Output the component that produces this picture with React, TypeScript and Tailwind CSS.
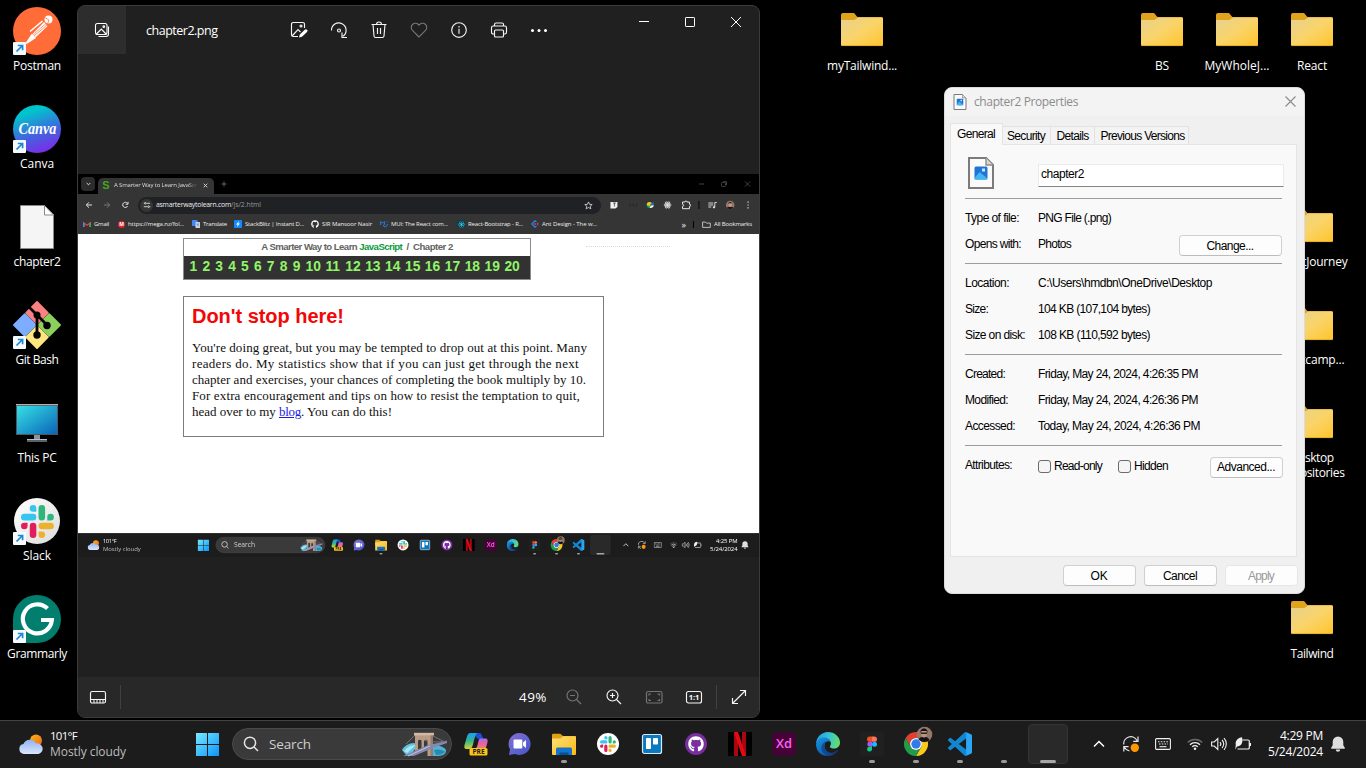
import { useLayoutEffect, useRef, useState } from "react";
import type { ReactNode } from "react";
import { FaGithub, FaReact } from "react-icons/fa";
import clsx from "clsx";

const UI = "font-['Open_Sans','Noto_Sans',sans-serif]";
const CLASSIC = "font-['Liberation_Sans',Arial,sans-serif]";

/** Text whose tracking is adjusted so that it spans `w` pixels. */
function Fit({ w, className, children }: { w: number; className?: string; children: string }) {
  const ref = useRef<HTMLSpanElement>(null);
  const [gap, setGap] = useState(0);
  useLayoutEffect(() => {
    if (ref.current) {
      const natural = parseFloat(getComputedStyle(ref.current).width);
      setGap((w - natural) / children.length);
    }
  }, []);
  return (
    <span ref={ref} className={clsx("inline-block w-max shrink-0 whitespace-pre", className)} style={{ letterSpacing: gap }}>
      {children}
    </span>
  );
}

/* ---------- Shared logos ---------- */

function SlackMark({ className }: { className?: string }) {
  return (
    <svg viewBox="0 0 54 54" className={className}>
      <path fill="#36C5F0" d="M19.712.133a5.381 5.381 0 0 0-5.376 5.387 5.381 5.381 0 0 0 5.376 5.386h5.376V5.52A5.381 5.381 0 0 0 19.712.133m0 14.365H5.376A5.381 5.381 0 0 0 0 19.884a5.381 5.381 0 0 0 5.376 5.387h14.336a5.381 5.381 0 0 0 5.376-5.387 5.381 5.381 0 0 0-5.376-5.386" />
      <path fill="#2EB67D" d="M53.76 19.884a5.381 5.381 0 0 0-5.376-5.386 5.381 5.381 0 0 0-5.376 5.386v5.387h5.376a5.381 5.381 0 0 0 5.376-5.387m-14.336 0V5.52A5.381 5.381 0 0 0 34.048.133a5.381 5.381 0 0 0-5.376 5.387v14.364a5.381 5.381 0 0 0 5.376 5.387 5.381 5.381 0 0 0 5.376-5.387" />
      <path fill="#ECB22E" d="M34.048 54a5.381 5.381 0 0 0 5.376-5.387 5.381 5.381 0 0 0-5.376-5.386h-5.376v5.386A5.381 5.381 0 0 0 34.048 54m0-14.365h14.336a5.381 5.381 0 0 0 5.376-5.386 5.381 5.381 0 0 0-5.376-5.387H34.048a5.381 5.381 0 0 0-5.376 5.387 5.381 5.381 0 0 0 5.376 5.386" />
      <path fill="#E01E5A" d="M0 34.249a5.381 5.381 0 0 0 5.376 5.386 5.381 5.381 0 0 0 5.376-5.386v-5.387H5.376A5.381 5.381 0 0 0 0 34.25m14.336-.001v14.364A5.381 5.381 0 0 0 19.712 54a5.381 5.381 0 0 0 5.376-5.387V34.25a5.381 5.381 0 0 0-5.376-5.387 5.381 5.381 0 0 0-5.376 5.387" />
    </svg>
  );
}

function ImageFileIcon({ className }: { className?: string }) {
  return (
    <svg viewBox="0 0 26 32" className={className}>
      <path d="M1 1h17l7 7v23H1z" fill="#fafafa" stroke="#7d7b78" strokeWidth="2" />
      <path d="M18 1v7h7" fill="#d8d6d3" stroke="#8d8b88" strokeWidth="1.4" />
      <rect x="6.500" y="9.500" width="13" height="13" rx="1.500" fill="#1f74d6" />
      <path d="M6.500 21l5-6 8 6.500a1.500 1.500 0 0 1-1.500 1H8a1.500 1.500 0 0 1-1.500-1.500z" fill="#41b6f0" />
      <rect x="14" y="11.500" width="3" height="3" fill="#c8e6ff" />
    </svg>
  );
}

/* ---------- Desktop ---------- */

function PostmanIcon() {
  return (
    <svg viewBox="0 0 48 48" className="size-12">
      <circle cx="24" cy="24" r="24" fill="#ff6c37" />
      <circle cx="35.500" cy="12.500" r="4" fill="#fff" />
      <path d="M32 10.500l3.800 2.400-1 3.600" stroke="#ff6c37" strokeWidth=".8" fill="none" />
      <path d="M31 15L19 27.500l3.500 3L34.500 19z" fill="#fff" />
      <path d="M17 24.500L29.500 14" stroke="#fff" strokeWidth="1.600" />
      <path d="M20.500 27.500L33 16.500M21 29L34 18" stroke="#ff6c37" strokeWidth=".7" />
      <path d="M18.500 27l4.500 4-8.500 5.500L12 37z" fill="#fff" />
    </svg>
  );
}

function CanvaIcon() {
  return (
    <svg viewBox="0 0 48 48" className="size-12">
      <defs>
        <linearGradient id="canva" x1=".3" y1="0" x2=".65" y2="1">
          <stop offset=".15" stopColor="#00c4cc" />
          <stop offset=".6" stopColor="#4165e0" />
          <stop offset="1" stopColor="#7d2ae8" />
        </linearGradient>
      </defs>
      <circle cx="24" cy="24" r="24" fill="url(#canva)" />
      <text x="24.500" y="28.500" textAnchor="middle" textLength="38" lengthAdjust="spacingAndGlyphs" fontFamily="Liberation Serif" fontStyle="italic" fontWeight="700" fontSize="16.500" fill="#fff">
        Canva
      </text>
    </svg>
  );
}

function DocIcon() {
  return (
    <svg viewBox="0 0 48 48" className="size-12">
      <path d="M7.500 2.500h24l9 9v34h-33z" fill="#f5f5f5" stroke="#8a8a8a" />
      <path d="M31.500 2.500v9.500h9z" fill="#fff" stroke="#8a8a8a" />
    </svg>
  );
}

function GitBashIcon() {
  return (
    <svg viewBox="0 0 48 48" className="size-12">
      <g strokeWidth="1.800" strokeLinejoin="round">
        <path d="M24 1L34.800 11.800 24 22.600 13.200 11.800z" fill="#fc8080" stroke="#fc8080" />
        <path d="M36.200 13.200L47 24 36.200 34.800 25.400 24z" fill="#8ccf5c" stroke="#8ccf5c" />
        <path d="M11.800 13.200L22.600 24 11.800 34.800 1 24z" fill="#7cadff" stroke="#7cadff" />
        <path d="M24 25.400L34.800 36.200 24 47 13.200 36.200z" fill="#ffe57f" stroke="#ffe57f" />
      </g>
      <path d="M16 6L24 14V35M24 14L34 24" stroke="#000" strokeWidth="2.800" fill="none" />
      <circle cx="24" cy="14" r="3.500" />
      <circle cx="24" cy="34" r="3.700" />
      <circle cx="34" cy="24.500" r="3.700" />
    </svg>
  );
}

function PcIcon() {
  return (
    <svg viewBox="0 2 48 48" className="size-12">
      <defs>
        <linearGradient id="pc" x1="0" y1="0" x2="1" y2="1">
          <stop offset="0" stopColor="#36e0e6" />
          <stop offset="1" stopColor="#0a64b8" />
        </linearGradient>
      </defs>
      <rect x="3" y="7.500" width="42" height="30.500" fill="#4e565e" />
      <rect x="3" y="7" width="42" height="1.200" fill="#aab2ba" />
      <rect x="4" y="9" width="40" height="28" fill="url(#pc)" />
      <rect x="21" y="38" width="6" height="4" fill="#8a929c" />
      <rect x="14" y="42" width="20" height="3" fill="#58606a" />
      <rect x="14" y="42" width="20" height="1" fill="#b8bfc8" />
    </svg>
  );
}

function SlackIcon() {
  return (
    <div className="flex size-12 items-center justify-center">
      <div className="flex size-[46px] items-center justify-center rounded-full bg-linear-to-br from-white to-[#dcdcdc]">
        <SlackMark className="size-[33px]" />
      </div>
    </div>
  );
}

function GrammarlyIcon() {
  return (
    <svg viewBox="0 0 48 48" className="size-12">
      <path d="M24 0a24 24 0 1 1 0 48H4a4 4 0 0 1-4-4V24A24 24 0 0 1 24 0z" fill="#027e6f" />
      <path d="M34.500 13.500A14.500 14.500 0 1 0 38.800 25H28" fill="none" stroke="#fff" strokeWidth="4.200" />
    </svg>
  );
}

function FolderIcon({ n }: { n: number }) {
  return (
    <svg viewBox="0 -1 48 48" className="size-12">
      <defs>
        <linearGradient id={`folder${n}`} x1="0" y1="0" x2="1" y2="1">
          <stop offset="0" stopColor="#e6d190" />
          <stop offset=".5" stopColor="#fad469" />
          <stop offset="1" stopColor="#ffc42c" />
        </linearGradient>
      </defs>
      <path d="M3 7a2 2 0 0 1 2-2h10.500c1.500 0 2.500 3 4 4H43.500a1.500 1.500 0 0 1 1.500 1.500V20H3z" fill="#dfa31c" />
      <path d="M3 12h13.500L20 9.600h23.500A1.500 1.500 0 0 1 45 11v25.500a1.500 1.500 0 0 1-1.500 1.500h-39A1.500 1.500 0 0 1 3 36.500z" fill={`url(#folder${n})`} />
      <path d="M3.300 37.600h41.400" stroke="#dba520" strokeWidth=".8" />
    </svg>
  );
}

function Shortcut() {
  return (
    <svg viewBox="0 0 13 13" className="absolute bottom-0 left-0 size-[13px]">
      <rect width="13" height="13" rx="1" fill="#f7fafd" />
      <path d="M3.500 9.500L9 4M4.800 3.500h4.800v4.800" stroke="#1b86d8" strokeWidth="1.700" fill="none" />
    </svg>
  );
}

type DesktopItem = { x: string; icon: ReactNode; lines: [string, number][]; link?: boolean };

const desktop: DesktopItem[] = [
  { x: "left-0 top-[7px]", icon: <PostmanIcon />, lines: [["Postman", 48]], link: true },
  { x: "left-0 top-[105px]", icon: <CanvaIcon />, lines: [["Canva", 34]], link: true },
  { x: "left-0 top-[203px]", icon: <DocIcon />, lines: [["chapter2", 47]] },
  { x: "left-0 top-[301px]", icon: <GitBashIcon />, lines: [["Git Bash", 43]], link: true },
  { x: "left-0 top-[399px]", icon: <PcIcon />, lines: [["This PC", 39]] },
  { x: "left-0 top-[497px]", icon: <SlackIcon />, lines: [["Slack", 28]], link: true },
  { x: "left-0 top-[595px]", icon: <GrammarlyIcon />, lines: [["Grammarly", 60]], link: true },
  { x: "left-[825px] top-[7px]", icon: <FolderIcon n={1} />, lines: [["myTailwind...", 70]] },
  { x: "left-[1125px] top-[7px]", icon: <FolderIcon n={2} />, lines: [["BS", 14]] },
  { x: "left-[1200px] top-[7px]", icon: <FolderIcon n={3} />, lines: [["MyWholeJ...", 65]] },
  { x: "left-[1275px] top-[7px]", icon: <FolderIcon n={4} />, lines: [["React", 30]] },
  { x: "left-[1275px] top-[203px]", icon: <FolderIcon n={5} />, lines: [["ReactJourney", 71]] },
  { x: "left-[1275px] top-[301px]", icon: <FolderIcon n={6} />, lines: [["Bootcamp...", 65]] },
  { x: "left-[1275px] top-[399px]", icon: <FolderIcon n={7} />, lines: [["Desktop", 43], ["Repositories", 65]] },
  { x: "left-[1275px] top-[595px]", icon: <FolderIcon n={8} />, lines: [["Tailwind", 43]] },
];

/* ---------- Taskbar ---------- */

function WeatherIcon() {
  return (
    <svg viewBox="0 0 24 20" className="h-5 w-6">
      <defs>
        <linearGradient id="cloud" x1="0" y1="0" x2="0" y2="1">
          <stop offset="0" stopColor="#8fb4f4" />
          <stop offset="1" stopColor="#dbe7fb" />
        </linearGradient>
        <linearGradient id="sun" x1="0" y1="0" x2="1" y2="1">
          <stop offset="0" stopColor="#f9b716" />
          <stop offset="1" stopColor="#f2661b" />
        </linearGradient>
      </defs>
      <circle cx="17" cy="6.500" r="6" fill="url(#sun)" />
      <path d="M5 20a5 5 0 0 1-.6-9.900A7 7 0 0 1 17 9.500a5.300 5.300 0 0 1 2.500 10.500z" fill="url(#cloud)" />
    </svg>
  );
}

function WindowsIcon() {
  return (
    <svg viewBox="0 0 23 23" className="size-[23px]">
      <defs>
        <linearGradient id="win" x1="0" y1="0" x2="23" y2="23" gradientUnits="userSpaceOnUse">
          <stop offset="0" stopColor="#77eafe" />
          <stop offset="1" stopColor="#0b93fa" />
        </linearGradient>
      </defs>
      <path d="M0 0h11v11H0zM12 0h11v11H12zM0 12h11v11H0zM12 12h11v11H12z" fill="url(#win)" />
    </svg>
  );
}

function BridgeIcon() {
  return (
    <svg viewBox="0 0 46 25" className="h-[25px] w-[46px]">
      <path d="M1 18c2-4 7-7 12-7l4 2-8 11H6z" fill="#63c3e0" />
      <path d="M3 19c3-4 7-6 12-6l-9 8z" fill="#a8e8f6" />
      <path d="M31 14c7-1 14 1 14 5s-5 5-9 5h-9z" fill="#4fb4d6" />
      <path d="M33 18c5-1 9 0 11 2-2 2-5 3-9 3z" fill="#2689b3" />
      <path d="M5 12L14 3M14 4c8 6 20 7 32 5M32 4l10 5" stroke="#8b8a96" strokeWidth=".7" fill="none" />
      <path d="M14 2h18v22h-5.500V8.500a2.200 2.200 0 0 0-3.500 0V20h-2.500V8.500a2.200 2.200 0 0 0-3.500 0V20h-3z" fill="#b99c85" />
      <path d="M13 .8h20v2.600H13z" fill="#d3b9a3" />
      <path d="M29.500 3.400H32V24h-2.500z" fill="#967b69" />
      <path d="M2 24L27 13l19-4v2L32 16 13 24z" fill="#8488ad" />
      <path d="M7 24L29 14" stroke="#c8cbe0" strokeWidth=".9" />
    </svg>
  );
}

function CopilotIcon() {
  return (
    <svg viewBox="0 0 24 24" className="size-6">
      <defs>
        <linearGradient id="cpa" x1="0" y1="0" x2="0" y2="1">
          <stop offset="0" stopColor="#1e9df0" />
          <stop offset=".5" stopColor="#36b58e" />
          <stop offset="1" stopColor="#d2d62f" />
        </linearGradient>
        <linearGradient id="cpb" x1="0" y1="0" x2="0" y2="1">
          <stop offset="0" stopColor="#a56cf0" />
          <stop offset=".5" stopColor="#ea5fa4" />
          <stop offset="1" stopColor="#f58a4d" />
        </linearGradient>
      </defs>
      <path d="M7.500 1h7.500c2 0 2.500 1 3.300 3.500L19.500 7H14L10 3z" fill="#1a50d8" />
      <path d="M6.500 1h7c-2 1-2.500 4-3.500 7.500S8.500 17 5.500 17H3c-3 0-3-2-2.200-5L3 4.500C3.800 2 4.500 1 6.500 1z" fill="url(#cpa)" />
      <path d="M16.500 6.500H21c3 0 3 2 2.200 5L21.500 17H11c2-1 2.500-4 3-6s.8-4.500 2.500-4.500z" fill="url(#cpb)" />
      <rect x="5.500" y="16" width="18" height="7.500" rx="1.500" fill="#fcc516" />
      <text x="14.500" y="22.200" textAnchor="middle" fontSize="6.600" fontWeight="700" fontFamily="Open Sans" fill="#222">
        PRE
      </text>
    </svg>
  );
}

function ChatIcon() {
  return (
    <svg viewBox="0 0 24 24" className="size-6">
      <defs>
        <linearGradient id="chat" x1="0" y1="0" x2="1" y2="1">
          <stop offset="0" stopColor="#8b6fcf" />
          <stop offset=".6" stopColor="#5c62cf" />
          <stop offset="1" stopColor="#4a50bd" />
        </linearGradient>
      </defs>
      <path d="M11.500 1a11 11 0 1 1-4.500 21L1 23l1-5.500A11 11 0 0 1 11.500 1z" fill="url(#chat)" />
      <rect x="5.500" y="7.500" width="8.800" height="9" rx="1" fill="#fff" />
      <path d="M15 10.500l3-2.500v8l-3-2.500z" fill="#fff" />
    </svg>
  );
}

function ExplorerIcon() {
  return (
    <svg viewBox="0 0 24 24" className="size-6">
      <defs>
        <linearGradient id="exp" x1="0" y1="0" x2="1" y2="1">
          <stop offset="0" stopColor="#ffe07a" />
          <stop offset="1" stopColor="#fdb913" />
        </linearGradient>
      </defs>
      <path d="M0 3a1.300 1.300 0 0 1 1.300-1.300h7L11 4h12a1 1 0 0 1 1 1v8H0z" fill="#e0a010" />
      <path d="M0 6.500h8.500L11 4.300h12a1 1 0 0 1 1 1V22a1 1 0 0 1-1 1H1a1 1 0 0 1-1-1z" fill="url(#exp)" />
      <path d="M4 23v-6a1.500 1.500 0 0 1 1.500-1.500h13A1.500 1.500 0 0 1 20 17v6z" fill="#1374c9" />
      <path d="M7.500 23v-2.500h9V23z" fill="#0a4f94" />
    </svg>
  );
}

function TrelloIcon() {
  return (
    <svg viewBox="0 0 24 24" className="size-6">
      <rect x="2.500" y="2.500" width="19" height="19" rx="2" fill="#0b79bf" stroke="#d8eaf5" strokeWidth="1.200" />
      <rect x="6" y="6" width="5" height="11" rx=".8" fill="#fff" />
      <rect x="13" y="6" width="5" height="6.500" rx=".8" fill="#fff" />
    </svg>
  );
}

function NetflixIcon() {
  return (
    <svg viewBox="0 0 24 24" className="size-6">
      <rect width="24" height="24" fill="#000" />
      <rect x="6" width="4" height="24" fill="#a80711" />
      <rect x="14" width="4" height="24" fill="#a80711" />
      <path d="M6 0h4l8 24h-4z" fill="#e50914" />
    </svg>
  );
}

function XdIcon() {
  return (
    <svg viewBox="0 0 24 24" className="size-6">
      <rect x=".5" y=".5" width="23" height="23" rx="4" fill="#470137" />
      <text x="12" y="16.300" textAnchor="middle" textLength="16" lengthAdjust="spacingAndGlyphs" fontSize="13" fontWeight="600" fontFamily="Open Sans" fill="#ff61f6">
        Xd
      </text>
    </svg>
  );
}

function EdgeIcon() {
  return (
    <svg viewBox="0 0 24 24" className="size-6">
      <defs>
        <linearGradient id="edga" x1="0" y1=".3" x2="1" y2=".5">
          <stop offset="0" stopColor="#1f9fe0" />
          <stop offset=".5" stopColor="#35c3d4" />
          <stop offset="1" stopColor="#66dd6a" />
        </linearGradient>
        <linearGradient id="edgb" x1="0" y1="0" x2=".6" y2="1">
          <stop offset="0" stopColor="#1796e2" />
          <stop offset="1" stopColor="#0d58a8" />
        </linearGradient>
      </defs>
      <path d="M0 11.500C.5 5 5.500 0 12 0s12 5 12 10.500c0 4-3 6-6 6-3.500 0-4.500-1.500-3.800-2.800.9-1.200 1-2.700.3-4C12.500 5 3.500 5.500 0 11.500z" fill="url(#edga)" />
      <path d="M0 12c1-4.500 4.500-6.500 8-6.500 3.700 0 6 2 6.500 4.500-2-1.500-6-.5-6 4 0 5 5 8.500 10 7.300C12.500 26.500 0 24 0 12z" fill="url(#edgb)" />
      <path d="M8.500 13.500c-.5 6 6.500 9.500 13 4.500.6-.3 1 .2.700.8C17.500 26 7 24.500 5.500 17 5 12.500 8 10 10.500 9.300 9 10.500 8.500 12 8.500 13.500z" fill="#123f84" opacity=".75" />
    </svg>
  );
}

function FigmaIcon() {
  return (
    <svg viewBox="0 0 24 24" className="size-6">
      <rect width="24" height="24" rx="2" fill="#202020" />
      <path d="M12 4.500v5.300H9.700a2.650 2.650 0 0 1 0-5.300z" fill="#f24e1e" />
      <path d="M12 4.500h2.300a2.650 2.650 0 0 1 0 5.300H12z" fill="#ff7262" />
      <path d="M12 9.800v4.900H9.700a2.450 2.450 0 0 1 0-4.900z" fill="#a259ff" />
      <circle cx="14.500" cy="12.200" r="2.500" fill="#1abcfe" />
      <path d="M9.700 14.700H12v2.400a2.450 2.450 0 1 1-2.300-2.400z" fill="#0acf83" />
    </svg>
  );
}

function ChromeIcon() {
  return (
    <svg viewBox="0 0 24 24" className="size-6 overflow-visible">
      <path d="M12 6H22.400A12 12 0 0 0 1.600 6L6.800 15A6 6 0 0 1 12 6z" fill="#e33e2f" />
      <path d="M22.400 6A12 12 0 0 1 12 24L17.200 15A6 6 0 0 0 12 6z" fill="#fbc919" />
      <path d="M1.600 6A12 12 0 0 0 12 24L17.200 15A6 6 0 0 1 6.800 15z" fill="#1f9d49" />
      <circle cx="12" cy="12" r="6" fill="#fff" />
      <circle cx="12" cy="12" r="4.700" fill="#2f7bea" />
      <circle cx="20.500" cy="2.500" r="7.800" fill="#93796b" />
      <path d="M14.500 7.500c1.500-2.500 3-2.500 5.500-2.500s4.500.5 5.500 3a7.800 7.800 0 0 1-11-.5z" fill="#141417" />
      <path d="M17.300-1h5.400v3.500a2.700 3 0 0 1-5.400 0z" fill="#c09379" />
      <path d="M16.500 1c-1-6 8-6 7 0l-.9-2h-5.200z" fill="#16100e" />
      <path d="M17 1.200h6" stroke="#16100e" strokeWidth="1.300" />
    </svg>
  );
}

function CodeIcon() {
  return (
    <svg viewBox="0 0 24 24" className="size-6">
      <path fill="#1187d2" d="M23.150 2.587L18.210.21a1.494 1.494 0 0 0-1.705.290l-9.460 8.630-4.120-3.128a.999.999 0 0 0-1.276.057L.327 7.261A1 1 0 0 0 .326 8.740L3.899 12 .326 15.260a1 1 0 0 0 .001 1.479L1.650 17.940a.999.999 0 0 0 1.276.057l4.120-3.128 9.460 8.630a1.492 1.492 0 0 0 1.704.290l4.942-2.377A1.500 1.500 0 0 0 24 20.060V3.939a1.500 1.500 0 0 0-.850-1.352zm-5.146 14.861L10.826 12l7.178-5.448v10.896z" />
      <path fill="#2ca6f2" d="M18.200.2l4.950 2.387A1.500 1.500 0 0 1 24 3.939V20.060a1.500 1.500 0 0 1-.850 1.352L18.200 23.800z" />
    </svg>
  );
}

type App = { name: string; icon?: ReactNode; mark?: "dot" | "active" };

const apps: App[] = [
  { name: "copilot", icon: <CopilotIcon /> },
  { name: "chat", icon: <ChatIcon /> },
  { name: "explorer", icon: <ExplorerIcon />, mark: "dot" },
  {
    name: "slack",
    icon: (
      <div className="flex size-[22px] items-center justify-center rounded-full bg-white">
        <SlackMark className="size-4" />
      </div>
    ),
  },
  { name: "trello", icon: <TrelloIcon /> },
  {
    name: "github",
    icon: (
      <div className="flex size-[22px] items-center justify-center rounded-full bg-[#7a2fa0]">
        <FaGithub className="size-4 text-white" />
      </div>
    ),
  },
  { name: "netflix", icon: <NetflixIcon /> },
  { name: "xd", icon: <XdIcon /> },
  { name: "edge", icon: <EdgeIcon /> },
  { name: "figma", icon: <FigmaIcon />, mark: "dot" },
  { name: "chrome", icon: <ChromeIcon />, mark: "dot" },
  { name: "code", icon: <CodeIcon />, mark: "dot" },
];

function Taskbar({ time, capture }: { time: string; capture?: boolean }) {
  const items: App[] = [...apps, ...(capture ? [] : [{ name: "blank", mark: "dot" } as App]), { name: "photos", mark: "active" }];
  return (
    <div className={clsx("flex h-12 w-[1366px] shrink-0 items-center overflow-hidden border-t border-[#434343] bg-[#1c1c1c] pb-px text-white", UI)}>
      <div className={clsx("flex shrink-0 items-center pl-[19px]", capture ? "w-[229px]" : "w-[185px]")}>
        <WeatherIcon />
        <div className="ml-[7px] flex flex-col items-start text-[12px] leading-4">
          <Fit w={27} className="text-[11.5px]">101°F</Fit>
          <Fit w={76} className="text-[#bdbdbd]">Mostly cloudy</Fit>
        </div>
      </div>
      <div className="flex w-11 shrink-0 items-center justify-center">
        <WindowsIcon />
      </div>
      <div className="ml-[3px] flex h-8 w-[220px] shrink-0 items-center rounded-full border border-[#4a4a4a] bg-[#3a3a3a] pr-1 pl-2.5">
        <svg viewBox="0 0 16 16" className="size-4" fill="none" stroke="#e6e6e6" strokeWidth="1.500">
          <circle cx="7" cy="6.800" r="5.600" />
          <path d="M11 11l4 4" />
        </svg>
        <Fit w={42} className="ml-2.5 text-[13.5px] text-[#cfcfcf]">Search</Fit>
        <div className="ml-auto">
          <BridgeIcon />
        </div>
      </div>
      <div className="ml-0.5 flex shrink-0">
        {items.map((a) => (
          <div key={a.name} className="relative flex h-[46px] w-11 items-center justify-center">
            {a.mark === "active" && <div className="size-10 rounded border border-[#343434] bg-[#292929]" />}
            {a.icon}
            {a.mark === "dot" && <div className="absolute bottom-1 left-[19px] h-[3px] w-1.5 rounded-full bg-[#9a9a9a]" />}
            {a.mark === "active" && <div className="absolute bottom-1 left-[14px] h-[3px] w-4 rounded-full bg-[#a6a6a6]" />}
          </div>
        ))}
      </div>
      <div className={clsx("flex shrink-0 items-center", capture ? "ml-[13px]" : "ml-[13px]")}>
        <div className="flex w-8 justify-center">
          <svg viewBox="0 0 12 8" className="h-2 w-3" fill="none" stroke="#fff" strokeWidth="1.500">
            <path d="M1 6.500l5-5 5 5" />
          </svg>
        </div>
        <div className="flex w-8 justify-center">
          <svg viewBox="0 0 16 16" className="size-4" fill="none" stroke="#e8e8e8" strokeWidth="1.200">
            <path d="M.8 8.500A7 7 0 0 1 14 4.500M15 .5v4.800h-4.800M.8 15.500v-4.800h4.800M1.500 11.500a7 7 0 0 0 5 3.500" />
            <circle cx="11.800" cy="11.800" r="4.200" fill="#ff9800" stroke="none" />
          </svg>
        </div>
        <div className="flex w-8 justify-center">
          <svg viewBox="0 0 16 12" className="h-3 w-4" fill="none" stroke="#f0f0f0" strokeWidth="1.100">
            <rect x=".6" y=".6" width="14.800" height="10.800" rx="1.200" />
            <path d="M3 3.700h10.500" strokeDasharray="1.500 1.300" />
            <path d="M4 6h9" strokeDasharray="1.500 1.300" />
            <path d="M4.500 8.700h7" />
          </svg>
        </div>
        <div className="ml-1 flex w-6 justify-center">
          <svg viewBox="0 0 16 12" className="h-3 w-4" fill="none" strokeWidth="1.300">
            <path d="M.8 4.500a10.200 10.200 0 0 1 14.400 0" stroke="#6a6a6a" />
            <path d="M3 6.700a7 7 0 0 1 10 0M5.200 8.900a4 4 0 0 1 5.600 0" stroke="#f0f0f0" />
            <circle cx="8" cy="10.700" r="1.300" fill="#f0f0f0" />
          </svg>
        </div>
        <div className="flex w-6 justify-center">
          <svg viewBox="0 0 16 14" className="h-3.5 w-4" fill="none" stroke="#f0f0f0" strokeWidth="1.100">
            <path d="M.6 5v4h2.600l3.600 3.500v-11L3.200 5zM9 5a3 3 0 0 1 0 4M11 3a5.500 5.500 0 0 1 0 8M13 1.200a8.500 8.500 0 0 1 0 11.600" />
          </svg>
        </div>
        <div className="flex w-6 justify-center">
          <svg viewBox="0 0 16 14" className="h-3.5 w-4" fill="none" stroke="#f0f0f0" strokeWidth="1.200">
            <path d="M7.500 3h5.500a1.300 1.300 0 0 1 1.300 1.300v6.400A1.300 1.300 0 0 1 13 12H2.500M15.500 6v3" />
            <path d="M7 .2C3 .8 0 3.500.8 8L.2 12.500l1.800-3C6 9.500 8.500 5.500 7 .2z" fill="#f0f0f0" stroke="none" />
          </svg>
        </div>
        <div className="flex w-[68px] flex-col items-end text-[12px] leading-4">
          <Fit w={43}>{time}</Fit>
          <Fit w={55}>5/24/2024</Fit>
        </div>
        <svg viewBox="0 0 16 16" className="ml-[7px] size-4" fill="#dedede">
          <path d="M8 .5a5.300 5.300 0 0 1 5.300 5.300v3.400l1.500 2.600a.6.6 0 0 1-.6.900H1.800a.6.6 0 0 1-.6-.9l1.500-2.600V5.800A5.300 5.300 0 0 1 8 .5zM5.800 13.600h4.400a2.200 2.200 0 0 1-4.400 0z" />
        </svg>
      </div>
    </div>
  );
}

/* ---------- Photos window: displayed browser capture ---------- */

const bookmarks: { label: string; w: number; cell: string; icon: ReactNode }[] = [
  {
    label: "Gmail", w: 15, cell: "w-[35px]",
    icon: (
      <svg viewBox="0 0 8 8" className="size-2">
        <path d="M0 7V1.500L4 4.500l4-3V7H6.400V4.200L4 6 1.600 4.200V7z" fill="#ea4335" />
        <path d="M0 2v5h1.600V3.500z" fill="#4285f4" />
        <path d="M8 2v5H6.400V3.500z" fill="#34a853" />
      </svg>
    ),
  },
  { label: "https://mega.nz/fol...", w: 56, cell: "w-[74px]", icon: <div className="flex size-[7px] items-center justify-center rounded-full bg-[#e0242b] text-[5px] leading-none font-bold text-white">M</div> },
  {
    label: "Translate", w: 24, cell: "w-[42px]",
    icon: (
      <svg viewBox="0 0 8 8" className="size-2">
        <rect width="5.500" height="6" rx=".5" fill="#4285f4" />
        <rect x="3.500" y="2" width="4.500" height="6" rx=".5" fill="#ccd3de" />
        <path d="M4.500 4h2.500M5.500 4c0 1.500 1 2 1.500 2.500" stroke="#54709f" strokeWidth=".6" fill="none" />
      </svg>
    ),
  },
  {
    label: "StackBlitz | Instant D...", w: 59, cell: "w-[77px]",
    icon: (
      <svg viewBox="0 0 8 8" className="size-2">
        <rect width="8" height="8" rx=".8" fill="#1389fd" />
        <path d="M5 1L2 4.600h1.700L3 7l3-3.600H4.300z" fill="#fff" />
      </svg>
    ),
  },
  { label: "SIR Mansoor Nasir", w: 50, cell: "w-[69px]", icon: <FaGithub className="size-2 text-white" /> },
  {
    label: "MUI: The React com...", w: 57, cell: "w-[77px]",
    icon: (
      <svg viewBox="0 0 8 8" className="size-2" fill="none" stroke="#1f80e0" strokeWidth="1">
        <path d="M.6 5V1.500L2.600 3l2-1.500v3L3 5.600l2 1.400 2.300-1.500V4M7.300 1.500v1" />
      </svg>
    ),
  },
  { label: "React-Bootstrap - R...", w: 55, cell: "w-[74px]", icon: <div className="flex size-2 items-center justify-center rounded-[1px] bg-[#123c46]"><FaReact className="size-[7px] text-[#41e0fd]" /></div> },
  {
    label: "Ant Design - The w...", w: 55, cell: "w-[70px]",
    icon: (
      <svg viewBox="0 0 8 8" className="size-2" fill="none" strokeWidth="1.100">
        <path d="M5.500 1.900L4 .8.8 4 4 7.200l1.500-1.300" stroke="#1b8cff" />
        <path d="M6 2.800L7.200 4 6 5.200" stroke="#f5344c" />
        <circle cx="4" cy="4" r=".9" fill="#f5344c" stroke="none" />
      </svg>
    ),
  },
];

function BrowserTop() {
  return (
    <div className={clsx("text-[6px] font-medium text-[#ededed]", UI)}>
      <div className="flex h-5 items-center bg-black pl-[3px]">
        <div className="flex size-3.5 items-center justify-center rounded bg-[#2c2c2c]">
          <svg viewBox="0 0 5 4" className="h-1 w-[5px]" fill="none" stroke="#ddd">
            <path d="M.7 1l1.800 1.800L4.300 1" />
          </svg>
        </div>
        <div className="ml-[3px] flex h-4 w-[116px] items-center self-end rounded-t-[5px] bg-[#353535] pb-0.5 pl-[3px]">
          <span className="w-[10px] text-center font-['Liberation_Sans',sans-serif] text-[11px] leading-none font-bold text-[#3fa81c]">S</span>
          <Fit w={83} className="ml-[3px] bg-linear-to-r from-[#f0f0f0] from-88% to-[#454545] bg-clip-text text-transparent">A Smarter Way to Learn JavaScr</Fit>
          <svg viewBox="0 0 5 5" className="ml-1.5 size-[5px]" stroke="#ddd" strokeWidth=".9">
            <path d="M.7.7l3.600 3.600M4.300.7L.7 4.300" />
          </svg>
        </div>
        <svg viewBox="0 0 6 6" className="ml-[7px] size-1.5" stroke="#777" strokeWidth=".8">
          <path d="M3 .5v5M.5 3h5" />
        </svg>
        <svg viewBox="0 0 54 6" className="mr-[7px] ml-auto h-1.5 w-[54px]" fill="none" stroke="#5b5b5b" strokeWidth=".7">
          <path d="M1 3h5" />
          <rect x="23.500" y="1.500" width="4" height="4" rx=".8" />
          <path d="M25 .7h3.500V4M47 .5l5 5M52 .5l-5 5" />
        </svg>
      </div>
      <div className="flex h-[22px] items-center bg-[#353535] pl-[7px]">
        <svg viewBox="0 0 45 8" className="h-2 w-[45px] shrink-0" fill="none" stroke="#e3e3e3" strokeWidth="1">
          <path d="M7 4H1.500M4 1.300L1.300 4 4 6.700" />
          <path d="M19 4h5.500M22 1.300L24.700 4 22 6.700" stroke="#777" />
          <path d="M42.500 2.500a2.600 2.600 0 1 0 .1 2.600M43 .8v2.400h-2.400" />
        </svg>
        <div className="ml-2 flex h-[17px] w-[463px] shrink-0 items-center rounded-full bg-[#202124] pl-0.5">
          <div className="flex size-[13px] items-center justify-center rounded-full bg-[#363636]">
            <svg viewBox="0 0 8 8" className="size-2" fill="none" stroke="#ddd" strokeWidth=".9">
              <path d="M.8 2.300h1M3.600 2.300H7M.8 5.700h3.300M6.300 5.700h1" />
              <circle cx="2.400" cy="2.300" r=".8" />
              <circle cx="5.500" cy="5.700" r=".8" />
            </svg>
          </div>
          <Fit w={75} className="ml-[3px] text-[6.800px]">asmarterwaytolearn.com</Fit>
          <Fit w={30} className="text-[6.800px] text-[#96989c]">/js/2.html</Fit>
          <svg viewBox="0 0 10 10" className="mr-2 ml-auto size-[9px]" fill="none" stroke="#ddd" strokeWidth=".9">
            <path d="M5 1l1.200 2.700 2.900.2-2.200 1.900.7 2.900L5 7.200 2.400 8.700l.7-2.900L.9 3.900l2.900-.2z" />
          </svg>
        </div>
        <svg viewBox="0 0 155 12" className="ml-1 h-3 w-[154px] shrink-0" fill="none">
          <path d="M5.500 3h7v5l-2 1.500h-5z" fill="#f0f0f0" />
          <path d="M9.500 4v3.500M8 4h3" stroke="#444" strokeWidth=".8" />
          <path d="M25.500 4.500q-1 1.500 0 3M28 4.500l1 3M31.500 4.500q1 1.500 0 3" stroke="#222" strokeWidth="1" />
          <circle cx="45" cy="6" r="3" fill="#28a35a" />
          <path d="M42 6a3 3 0 0 1 3-3l2 1-2 3z" fill="#f3c51d" />
          <path d="M45 6l4-3v3z" fill="#2d62d8" />
          <path d="M45 9c3 0 4-1 4-3l-3 1z" fill="#fff" />
          <circle cx="63" cy="6" r="1.200" fill="#e8e8e8" />
          <g stroke="#d8d8d8" strokeWidth=".8">
            <ellipse cx="63" cy="6" rx="3.600" ry="1.500" />
            <ellipse cx="63" cy="6" rx="3.600" ry="1.500" transform="rotate(60 63 6)" />
            <ellipse cx="63" cy="6" rx="3.600" ry="1.500" transform="rotate(120 63 6)" />
          </g>
          <path d="M78 3h2.500a1 1 0 0 1 2 0h2.500v2.200a1 1 0 0 1 0 2.200V9.700h-7V7.400a1 1 0 0 0 0-2.200z" stroke="#e8e8e8" strokeWidth="1" />
          <path d="M94.500 2v8" stroke="#0c0c0c" strokeWidth="1.200" />
          <path d="M104 4h5M104 6h5M104 8h3M110.500 8.300V3.500h2" stroke="#e8e8e8" strokeWidth=".9" />
          <circle cx="109.600" cy="8.300" r="1.100" fill="#e8e8e8" />
          <circle cx="126" cy="6" r="4.300" fill="#93796b" />
          <path d="M122.800 8.800c1-1.300 5.400-1.300 6.400 0a4.300 4.300 0 0 1-6.400 0z" fill="#1b1615" />
          <path d="M124.400 4h3.200v2.300a1.600 1.600 0 0 1-3.200 0z" fill="#c29a80" />
          <path d="M123.800 5.500c-.3-3.500 4.700-3.500 4.400 0l-.6-1.200h-3.200z" fill="#1b1615" />
          <path d="M144 2.600v1.200M144 5.400v1.200M144 8.200v1.200" stroke="#eee" strokeWidth="1.100" />
        </svg>
      </div>
      <div className="flex h-[18px] items-center bg-[#353535] pb-0.5 pl-[5px]">
        {bookmarks.map((b) => (
          <div key={b.label} className={clsx("flex shrink-0 items-center", b.cell)}>
            {b.icon}
            <Fit w={b.w} className="ml-[3px]">{b.label}</Fit>
          </div>
        ))}
        <span className="ml-auto text-[9px] leading-none">»</span>
        <div className="ml-[7px] h-[7px] w-px bg-black" />
        <svg viewBox="0 0 9 7" className="ml-2 h-[7px] w-[9px]" fill="none" stroke="#ddd" strokeWidth=".8">
          <path d="M.6 1h2.700l1 1.100h4v4.300H.6z" />
        </svg>
        <Fit w={38} className="mr-[7px] ml-[3px]">All Bookmarks</Fit>
      </div>
    </div>
  );
}

const chaptersShort = ["1", "2", "3", "4", "5", "6", "7", "8", "9"];
const chaptersLong = ["10", "11", "12", "13", "14", "15", "16", "17", "18", "19", "20"];

function BookPage() {
  return (
    <div className="h-[299px] bg-white pt-1 pl-[105px]">
      <div className="flex">
        <div className="h-[42px] w-[348px] border border-[#8c8c8c]">
          <div className={clsx("flex h-[17px] items-center justify-center text-[9.600px] font-bold whitespace-pre text-[#636363]", CLASSIC)}>
            <Fit w={98}>A Smarter Way to Learn </Fit>
            <Fit w={43} className="text-[#0a9b3c]">JavaScript</Fit>
            <Fit w={50.5}>{"  /  Chapter 2"}</Fit>
          </div>
          <div className={clsx("flex h-[23px] items-center bg-[#323232] pl-[5.500px] text-[13.800px] font-bold text-[#91f569]", CLASSIC)}>
            {chaptersShort.map((c) => (
              <span key={c} className="w-[12.900px] shrink-0">{c}</span>
            ))}
            {chaptersLong.map((c) => (
              <span key={c} className="w-[19.900px] shrink-0">{c}</span>
            ))}
          </div>
        </div>
        <div className="mt-2 ml-[55px] h-px w-[84px] border-t border-dotted border-[#dcdcdc]" />
      </div>
      <div className="mt-4 h-[141px] w-[421px] border border-[#7c7c7c] pt-2 pl-2">
        <div className={clsx("h-6 text-[20px] leading-[23px] font-bold text-[#f30606]", CLASSIC)}>
          <Fit w={152}>Don't stop here!</Fit>
        </div>
        <div className="mt-[11px] flex flex-col items-start font-['Liberation_Serif',Georgia,serif] text-[13px] leading-4 text-[#111]">
          <Fit w={395}>You're doing great, but you may be tempted to drop out at this point. Many</Fit>
          <Fit w={387}>readers do. My statistics show that if you can just get through the next</Fit>
          <Fit w={394}>chapter and exercises, your chances of completing the book multiply by 10.</Fit>
          <Fit w={388}>For extra encouragement and tips on how to resist the temptation to quit,</Fit>
          <div className="flex">
            <Fit w={87}>head over to my </Fit>
            <Fit w={22} className="text-[#1a1ae6] underline">blog</Fit>
            <Fit w={91}>. You can do this!</Fit>
          </div>
        </div>
      </div>
    </div>
  );
}

/* ---------- Photos window chrome ---------- */

function Tool({ children, dim }: { children: ReactNode; dim?: boolean }) {
  return (
    <div className="flex w-10 shrink-0 items-center justify-center">
      <svg viewBox="0 0 18 18" className="size-[18px]" fill="none" stroke={dim ? "#757575" : "#f4f4f4"} strokeWidth="1.150">
        {children}
      </svg>
    </div>
  );
}

function PhotosWindow() {
  return (
    <div className={clsx("absolute top-[5px] left-[77px] flex h-[713px] w-[683px] flex-col overflow-hidden rounded-lg border border-[#3b3b3b] bg-[#202020] text-white", UI)}>
      <div className="flex h-12 shrink-0">
        <div className="flex w-12 items-center justify-center bg-[#2d2d2d]">
          <svg viewBox="0 0 16 16" className="size-4" fill="none" stroke="#fff" strokeWidth="1.100">
            <rect x="1.500" y="1.500" width="11.500" height="11" rx="2" />
            <path d="M2.500 12l4.800-5 4.800 5M14.500 4.500V12a2.500 2.500 0 0 1-2.500 2.500H4.500" />
            <circle cx="9.800" cy="4.700" r=".8" />
          </svg>
        </div>
        <div className="flex w-[153px] items-center pt-[3px] pl-5 text-[12.500px]">
          <Fit w={71.5}>chapter2.png</Fit>
        </div>
        <Tool>
          <path d="M8 15.500H3.200a1.700 1.700 0 0 1-1.700-1.700V3.200a1.700 1.700 0 0 1 1.700-1.700h9.600a1.700 1.700 0 0 1 1.700 1.700V7M2.500 14.500l5.500-6 2.500 2.500" />
          <circle cx="11" cy="5" r="1" />
          <path d="M9 16.500l.8-3 5-4.800a1.500 1.500 0 0 1 2.200 2.200l-5 4.800z" fill="#fff" stroke="none" />
        </Tool>
        <Tool>
          <path d="M1.500 9.500A7.300 7.300 0 1 1 13 15.200M12 11.500v5h5" />
          <circle cx="9" cy="9.500" r="1.500" />
        </Tool>
        <Tool>
          <path d="M1.500 3.500h15M6.500 3.500a2.500 2.500 0 0 1 5 0M3 3.500l1 11.500a1.600 1.600 0 0 0 1.600 1.500h6.800A1.600 1.600 0 0 0 14 15l1-11.500M7.500 7v6M10.500 7v6" />
        </Tool>
        <Tool dim>
          <path d="M9 16L2.500 9.400a4.100 4.100 0 0 1 0-5.900 4.100 4.100 0 0 1 5.900 0l.6.6.6-.6a4.100 4.100 0 0 1 5.900 0 4.100 4.100 0 0 1 0 5.900z" />
        </Tool>
        <Tool>
          <circle cx="9" cy="9" r="7.300" />
          <path d="M9 7.800v5M9 5v1.400" />
        </Tool>
        <Tool>
          <path d="M4.500 5V3.500A1.500 1.500 0 0 1 6 2h6a1.500 1.500 0 0 1 1.500 1.500V5M4.500 13H3.200a1.700 1.700 0 0 1-1.700-1.700V6.700A1.700 1.700 0 0 1 3.200 5h11.600a1.700 1.700 0 0 1 1.700 1.700v4.600a1.700 1.700 0 0 1-1.700 1.700h-1.300" />
          <rect x="4.500" y="9" width="9" height="7" rx="1" />
        </Tool>
        <Tool>
          <g fill="#fff" stroke="none">
            <circle cx="2.500" cy="9.500" r="1.500" />
            <circle cx="9" cy="9.500" r="1.500" />
            <circle cx="15.500" cy="9.500" r="1.500" />
          </g>
        </Tool>
        <svg viewBox="0 0 138 32" className="ml-auto h-8 w-[138px] shrink-0" fill="none" stroke="#fff">
          <path d="M18 15.500h10" />
          <rect x="64.500" y="11.500" width="9" height="9" rx=".6" />
          <path d="M110 11l10 10M120 11l-10 10" />
        </svg>
      </div>
      <div className="h-[120px] shrink-0" />
      <BrowserTop />
      <BookPage />
      <div className="h-6 shrink-0 overflow-hidden">
        <div className="h-12 w-[1366px] origin-top-left scale-[0.4985]">
          <Taskbar time="4:25 PM" capture />
        </div>
      </div>
      <div className="h-[120px] shrink-0" />
      <div className="flex h-10 shrink-0 items-center bg-[#282828]">
        <Tool>
          <rect x="1.500" y="3.500" width="15" height="11.500" rx="1.800" />
          <path d="M1.500 11.500h15M5 11.500V15M8 11.500V15M11 11.500V15M14 11.500V15" strokeWidth="1" />
        </Tool>
        <div className="ml-0.5 h-6 w-px bg-[#404040]" />
        <div className="ml-auto pr-[7px] text-[13.500px]">
          <Fit w={28}>49%</Fit>
        </div>
        <Tool dim>
          <circle cx="7.500" cy="7.500" r="5.500" />
          <path d="M11.500 11.500L16 16M5 7.500h5" />
        </Tool>
        <Tool>
          <circle cx="7.500" cy="7.500" r="5.500" />
          <path d="M11.500 11.500L16 16M5 7.500h5M7.500 5v5" />
        </Tool>
        <Tool dim>
          <rect x="1.500" y="3.500" width="15.500" height="11.500" rx="1.500" />
          <path d="M4 7.500V6h2M12.500 6h2v1.500M14.500 11v1.500h-2M6 12.500H4V11" />
        </Tool>
        <Tool>
          <rect x="1.500" y="3.500" width="15" height="11.500" rx="2" />
          <text x="9" y="12" textAnchor="middle" fontSize="7.500" fontWeight="700" fontFamily="Open Sans" fill="#fff" stroke="none">1:1</text>
        </Tool>
        <div className="ml-[2px] h-6 w-px bg-[#404040]" />
        <div className="flex w-[42px] justify-end pr-[11px]">
          <svg viewBox="0 0 18 18" className="size-[18px]" fill="none" stroke="#f4f4f4" strokeWidth="1.150">
            <path d="M2.500 15.500l13-13M10 2.500h5.500V8M2.500 10v5.500H8" />
          </svg>
        </div>
      </div>
    </div>
  );
}

/* ---------- Properties dialog ---------- */

function Rule() {
  return <div className="h-px w-[317px] bg-[#9d9d9d]" />;
}

function Row({ label, lw, children }: { label: string; lw: number; children: ReactNode }) {
  return (
    <div className="flex h-[26px] items-center">
      <div className="w-[73px]">
        <Fit w={lw}>{label}</Fit>
      </div>
      {children}
    </div>
  );
}

function Push({ w, className, children }: { w: number; className?: string; children: string }) {
  return (
    <div className={clsx("flex h-[21px] items-center justify-center rounded border bg-[#fdfdfd] pr-px", className ?? "")}>
      <Fit w={w}>{children}</Fit>
    </div>
  );
}

function PropertiesDialog() {
  return (
    <div className={clsx("absolute top-[87px] left-[944px] h-[507px] w-[361px] overflow-hidden rounded-lg border border-[#dcdcdc] bg-[#f0f0f0] text-[12px] text-black", CLASSIC)}>
      <div className={clsx("flex h-7 items-center bg-[#f3f3f3] pl-2 text-[#8c8c8c]", UI)}>
        <ImageFileIcon className="mb-px h-4 w-3.5" />
        <Fit w={104} className="ml-[7px]">chapter2 Properties</Fit>
        <svg viewBox="0 0 11 11" className="mr-2 mb-0.5 ml-auto size-[11px]" stroke="#8a8a8a" strokeWidth="1.100">
          <path d="M.5.5l10 10M10.500.5l-10 10" />
        </svg>
      </div>
      <div className="flex h-7 items-end pl-[5px]">
        <div className="relative z-10 -mb-px flex h-[22px] w-[53px] items-center border border-b-0 border-[#e4e4e4] bg-[#f9f9f9] pb-0.5 pl-1.5">
          <Fit w={38}>General</Fit>
        </div>
        <div className="flex h-[18px] w-12 items-center justify-center border-t border-r border-[#e2e2e2] bg-[#f3f3f3] pr-px">
          <Fit w={38}>Security</Fit>
        </div>
        <div className="flex h-[18px] w-11 items-center justify-center border-t border-r border-[#e2e2e2] bg-[#f3f3f3]">
          <Fit w={32}>Details</Fit>
        </div>
        <div className="flex h-[18px] w-[94px] items-center justify-center border-t border-r border-[#e2e2e2] bg-[#f3f3f3] pl-0.5">
          <Fit w={84}>Previous Versions</Fit>
        </div>
      </div>
      <div className="ml-[5px] h-[413px] w-[347px] border border-[#e4e4e4] bg-[#f9f9f9] pl-3.5">
        <div className="flex h-[53px] pl-[3px]">
          <ImageFileIcon className="mt-3 h-8 w-[26px]" />
          <div className="mt-[19px] ml-11 flex h-[23px] w-[246px] items-center border border-[#ebebeb] border-b-[#868686] bg-white pb-[3px] pl-0.5">
            <Fit w={43}>chapter2</Fit>
          </div>
        </div>
        <Rule />
        <div className="py-1.5">
          <Row label="Type of file:" lw={54}><Fit w={73}>PNG File (.png)</Fit></Row>
          <Row label="Opens with:" lw={56}>
            <Fit w={33}>Photos</Fit>
            <Push w={47} className="mt-[3px] ml-[108px] w-[103px] border-[#d0d0d0] border-b-[#bcbcbc]">Change...</Push>
          </Row>
        </div>
        <Rule />
        <div className="py-1.5">
          <Row label="Location:" lw={44}><Fit w={174}>{"C:\\Users\\hmdbn\\OneDrive\\Desktop"}</Fit></Row>
          <Row label="Size:" lw={23}><Fit w={112}>104 KB (107,104 bytes)</Fit></Row>
          <Row label="Size on disk:" lw={60}><Fit w={112}>108 KB (110,592 bytes)</Fit></Row>
        </div>
        <Rule />
        <div className="py-1.5">
          <Row label="Created:" lw={40}><Fit w={160}>Friday, May 24, 2024, 4:26:35 PM</Fit></Row>
          <Row label="Modified:" lw={43}><Fit w={160}>Friday, May 24, 2024, 4:26:36 PM</Fit></Row>
          <Row label="Accessed:" lw={50}><Fit w={162}>Today, May 24, 2024, 4:26:36 PM</Fit></Row>
        </div>
        <Rule />
        <div className="py-1.5">
          <Row label="Attributes:" lw={47}>
            <div className="mt-0.5 flex w-20 items-center">
              <div className="size-[13px] rounded-[3px] border border-[#6b6b6b] bg-[#f5f5f5]" />
              <Fit w={48} className="ml-[3px]">Read-only</Fit>
            </div>
            <div className="mt-0.5 flex w-[92px] items-center">
              <div className="size-[13px] rounded-[3px] border border-[#6b6b6b] bg-[#f5f5f5]" />
              <Fit w={34} className="ml-[3px]">Hidden</Fit>
            </div>
            <Push w={58} className="mt-1 w-[73px] border-[#d0d0d0] border-b-[#bcbcbc]">Advanced...</Push>
          </Row>
        </div>
      </div>
      <div className="mt-2 flex justify-end gap-2 pr-1.5">
        <Push w={17} className="w-[73px] border-[#d0d0d0] border-b-[#bcbcbc]">OK</Push>
        <Push w={34} className="w-[73px] border-[#d0d0d0] border-b-[#bcbcbc]">Cancel</Push>
        <Push w={26} className="w-[73px] border-[#e6e6e6] text-[#9a9a9a]">Apply</Push>
      </div>
    </div>
  );
}

export default function App() {
  return (
    <div className="relative flex h-[768px] w-[1366px] flex-col justify-end overflow-hidden bg-black">
      {desktop.map((d) => (
        <div key={d.lines[0][0]} className={clsx("absolute flex w-[74px] flex-col items-center text-[12px] leading-[15px] text-white", UI, d.x)}>
          <div className="relative mb-[3px] size-12">
            {d.icon}
            {d.link && <Shortcut />}
          </div>
          {d.lines.map(([t, w]) => (
            <Fit key={t} w={w}>{t}</Fit>
          ))}
        </div>
      ))}
      <PhotosWindow />
      <PropertiesDialog />
      <Taskbar time="4:29 PM" />
    </div>
  );
}
